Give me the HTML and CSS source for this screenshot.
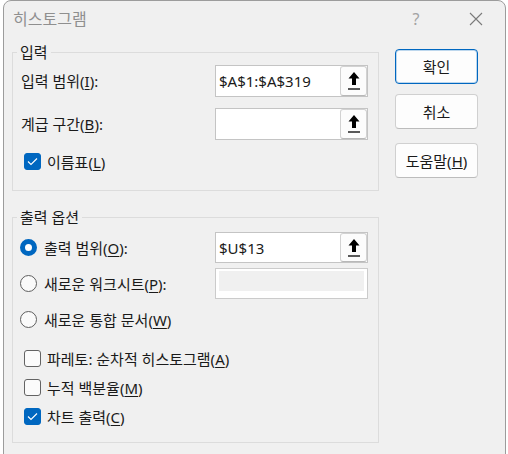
FILE: index.html
```html
<!DOCTYPE html>
<html lang="ko">
<head>
<meta charset="utf-8">
<title>히스토그램</title>
<link rel="stylesheet" href="styles.css">
</head>
<body>
<div class="dialog">
  <div class="titlebar">
    <span class="title">히스토그램</span>
    <span class="help">?</span>
    <span class="close"><svg width="14" height="14" viewBox="0 0 14 14"><path d="M1 1 L13 13 M13 1 L1 13" stroke="#7a7a7a" stroke-width="1.1" fill="none"/></svg></span>
  </div>
  <div class="content">
    <div class="groups">
      <fieldset class="group group-input">
        <legend>입력</legend>
        <div class="row field-row first">
          <span class="label">입력 범위(<u>I</u>):</span>
          <div class="ref">
            <span class="val">$A$1:$A$319</span>
            <span class="pick"><svg width="14" height="20" viewBox="0 0 14 20"><path d="M7 1 L12.5 7.5 L9 7.5 L9 14 L5 14 L5 7.5 L1.5 7.5 Z" fill="#000"/><path d="M1 18 H13" stroke="#000" stroke-width="1.3"/></svg></span>
          </div>
        </div>
        <div class="row field-row second">
          <span class="label">계급 구간(<u>B</u>):</span>
          <div class="ref">
            <span class="val"></span>
            <span class="pick"><svg width="14" height="20" viewBox="0 0 14 20"><path d="M7 1 L12.5 7.5 L9 7.5 L9 14 L5 14 L5 7.5 L1.5 7.5 Z" fill="#000"/><path d="M1 18 H13" stroke="#000" stroke-width="1.3"/></svg></span>
          </div>
        </div>
        <div class="row check-row labels-row">
          <span class="check on"><svg width="11" height="9" viewBox="0 0 11 9"><path d="M1 4.5 L4 7.5 L10 1.5" stroke="#fff" stroke-width="1.1" fill="none"/></svg></span>
          <span class="label">이름표(<u>L</u>)</span>
        </div>
      </fieldset>

      <fieldset class="group group-output">
        <legend>출력 옵션</legend>
        <div class="row field-row out-row">
          <span class="opt"><span class="radio on"></span><span class="label">출력 범위(<u>O</u>):</span></span>
          <div class="ref">
            <span class="val">$U$13</span>
            <span class="pick"><svg width="14" height="20" viewBox="0 0 14 20"><path d="M7 1 L12.5 7.5 L9 7.5 L9 14 L5 14 L5 7.5 L1.5 7.5 Z" fill="#000"/><path d="M1 18 H13" stroke="#000" stroke-width="1.3"/></svg></span>
          </div>
        </div>
        <div class="row field-row out-row">
          <span class="opt"><span class="radio"></span><span class="label">새로운 워크시트(<u>P</u>):</span></span>
          <div class="ref disabled"><span class="fill"></span></div>
        </div>
        <div class="row field-row out-row">
          <span class="opt"><span class="radio"></span><span class="label">새로운 통합 문서(<u>W</u>)</span></span>
        </div>
        <div class="row check-row list-row first-check">
          <span class="check"></span>
          <span class="label">파레토: 순차적 히스토그램(<u>A</u>)</span>
        </div>
        <div class="row check-row list-row">
          <span class="check"></span>
          <span class="label">누적 백분율(<u>M</u>)</span>
        </div>
        <div class="row check-row list-row">
          <span class="check on"><svg width="11" height="9" viewBox="0 0 11 9"><path d="M1 4.5 L4 7.5 L10 1.5" stroke="#fff" stroke-width="1.1" fill="none"/></svg></span>
          <span class="label">차트 출력(<u>C</u>)</span>
        </div>
      </fieldset>
    </div>

    <div class="buttons">
      <button class="btn default">확인</button>
      <button class="btn cancel">취소</button>
      <button class="btn helpbtn">도움말(<u>H</u>)</button>
    </div>
  </div>
</div>
</body>
</html>
```

FILE: styles.css
```css
html, body {
  margin: 0;
  padding: 0;
}
body {
  width: 508px;
  height: 454px;
  overflow: hidden;
  background: #ffffff;
  padding-left: 3px;
  box-sizing: border-box;
  font-family: "Noto Sans", "Noto Sans CJK KR", sans-serif;
  font-size: 15px;
  color: #1a1a1a;
}
.dialog {
  width: 503px;
  height: 470px;
  box-sizing: border-box;
  background: #f0f0f0;
  border: 1px solid #9c9c9c;
  border-radius: 8px 8px 0 0;
}
.titlebar {
  height: 35px;
  display: flex;
  align-items: center;
  padding-left: 9px;
}
.title {
  color: #8f8f8f;
  font-size: 16px;
  line-height: 20px;
}
.help {
  margin-left: auto;
  width: 20px;
  text-align: center;
  color: #a3a3a3;
  font-size: 16px;
  margin-right: 43px;
}
.close {
  width: 14px;
  height: 14px;
  display: flex;
  margin-right: 22px;
}
.content {
  display: flex;
  padding-top: 6px;
  padding-left: 8px;
}
.groups {
  display: flex;
  flex-direction: column;
  gap: 16px;
}
.group {
  margin: 0;
  width: 367px;
  box-sizing: border-box;
  border: 1px solid #dcdcdc;
  padding: 0 10px 0 4px;
  min-width: 0;
}
.group legend {
  padding: 0 3px;
  line-height: 20px;
  height: 20px;
  font-size: 15px;
  color: #1a1a1a;
}
.group-input {
  padding-bottom: 17px;
}
.group-output {
  padding-bottom: 11px;
}
.row {
  display: flex;
  align-items: center;
  padding-left: 4px;
}
.field-row {
  justify-content: space-between;
  height: 32px;
}
.field-row.first {
  margin-top: 3px;
}
.field-row.second {
  margin-top: 11px;
}
.labels-row {
  margin-top: 10px;
  height: 23px;
}
.out-row {
  height: 31px;
  margin-top: 5px;
  padding-left: 0;
}
.list-row {
  height: 29px;
}
.first-check {
  margin-top: 9px;
}
.label {
  line-height: 20px;
  white-space: nowrap;
}
.label u {
  text-underline-offset: 2px;
}
.ref {
  width: 153px;
  height: 100%;
  box-sizing: border-box;
  border: 1px solid #c4c4c4;
  background: #ffffff;
  display: flex;
  align-items: stretch;
}
.val {
  flex: 1;
  padding-left: 3px;
  display: flex;
  align-items: center;
  font-size: 15px;
  color: #1a1a1a;
}
.pick {
  width: 27px;
  box-sizing: border-box;
  border: 1px solid #d2d2d2;
  border-bottom-color: #b8b8b8;
  border-radius: 3px;
  background: #fcfcfc;
  display: flex;
  align-items: center;
  justify-content: center;
}
.ref.disabled {
  border-color: #cbcbcb;
  padding: 2px 3px 7px 3px;
}
.ref.disabled .fill {
  flex: 1;
  background: #f0f0f0;
}
.check {
  width: 17px;
  height: 17px;
  box-sizing: border-box;
  border: 1px solid #636363;
  border-radius: 3px;
  background: #fbfbfb;
  margin-left: 3px;
  margin-right: 6px;
  display: flex;
  align-items: center;
  justify-content: center;
  flex: none;
}
.check.on {
  background: #0067c0;
  border-color: #0067c0;
}
.opt {
  display: flex;
  align-items: center;
}
.radio {
  width: 17px;
  height: 17px;
  box-sizing: border-box;
  border-radius: 50%;
  border: 1px solid #5f5f5f;
  background: #fafafa;
  margin-left: 3px;
  margin-right: 7px;
  flex: none;
}
.radio.on {
  border: 5px solid #0067c0;
  background: #ffffff;
}
.buttons {
  display: flex;
  flex-direction: column;
  margin-left: 16px;
  padding-top: 7px;
}
.btn {
  width: 83px;
  height: 35px;
  box-sizing: border-box;
  border: 1px solid #d0d0d0;
  border-bottom-color: #bcbcbc;
  border-radius: 4px;
  background: #fdfdfd;
  font-family: "Noto Sans", "Noto Sans CJK KR", sans-serif;
  font-size: 15px;
  color: #1a1a1a;
  padding: 0;
}
.btn.default {
  border: 1px solid #0067c0;
  box-shadow: inset 0 0 0 1px rgba(0, 103, 192, 0.25);
}
.btn.cancel {
  margin-top: 10px;
}
.btn.helpbtn {
  margin-top: 14px;
}
```
